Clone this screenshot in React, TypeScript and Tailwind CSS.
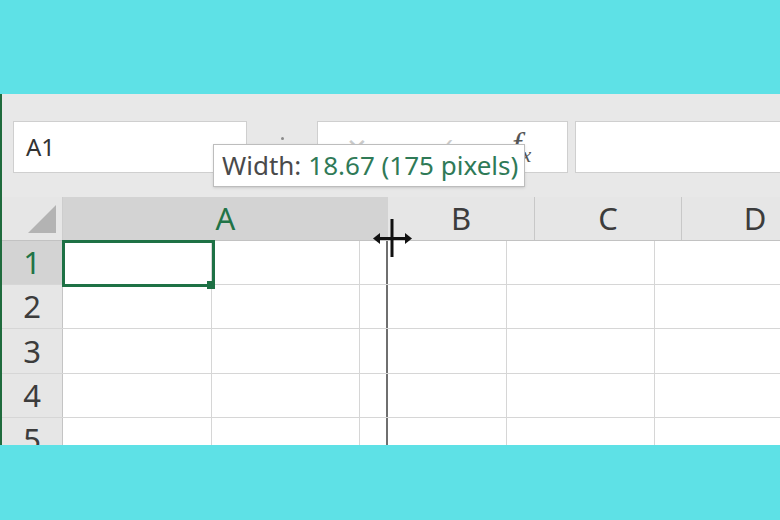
import React from 'react';

const font = { fontFamily: '"Noto Sans", "Open Sans", Arial, sans-serif' };

const cols = [
    { label: 'A', w: 'w-[325px]', active: true },
    { label: 'B', w: 'w-[147px]', active: false },
    { label: 'C', w: 'w-[147px]', active: false },
    { label: 'D', w: 'w-[147px]', active: false },
];

// grid lines in the body still sit on the old column widths
const cells = [
    'w-[149px] border-r border-[#d6d6d6]',
    'w-[148px] border-r border-[#d6d6d6]',
    'w-[28px] border-r-2 border-[#6f6f6f]',
    'w-[119px] border-r border-[#d6d6d6]',
    'w-[148px] border-r border-[#d6d6d6]',
    'w-[148px] border-r border-[#d6d6d6]',
];

const rows = [
    { n: 1, h: 'h-[44px]' },
    { n: 2, h: 'h-[44px]' },
    { n: 3, h: 'h-[45px]' },
    { n: 4, h: 'h-[44px]' },
    { n: 5, h: 'h-[44px]' },
];

const App: React.FC = () => {
    return (
        <div className="w-[780px] h-[520px] flex flex-col bg-[#5ee1e6] overflow-hidden" style={font}>
            <div className="h-[94px] shrink-0" />

            <div className="relative h-[351px] shrink-0 overflow-hidden bg-[#e8e8e8] border-l-2 border-[#1f6b3d]">
                {/* formula bar */}
                <div className="flex items-center h-[52px] mt-[27px] ml-[11px] -mr-[40px]">
                    <div className="w-[234px] h-full shrink-0 bg-white border border-[#cfcfcf] flex items-center pl-[12px] text-[24px] text-[#333]">
                        A1
                    </div>
                    <div className="w-[70px] h-full shrink-0 flex flex-col items-center justify-center gap-[6px]">
                        <span className="w-[3px] h-[3px] rounded-full bg-[#8a8a8a]" />
                        <span className="w-[3px] h-[3px] rounded-full bg-[#8a8a8a]" />
                        <span className="w-[3px] h-[3px] rounded-full bg-[#8a8a8a]" />
                    </div>
                    <div className="w-[251px] h-full shrink-0 bg-white border border-[#cfcfcf] flex items-start pt-[6px]">
                        <span className="ml-[28px] mt-[6px] text-[26px] text-[#cacaca] leading-none">✕</span>
                        <span className="ml-[68px] mt-[6px] text-[24px] text-[#cacaca] leading-none">✓</span>
                        <span
                            className="ml-[56px] text-[34px] italic text-[#555] leading-none"
                            style={{ fontFamily: '"Liberation Serif", "DejaVu Serif", serif' }}
                        >
                            f<sub className="text-[22px]">x</sub>
                        </span>
                    </div>
                    <div className="ml-[7px] flex-1 h-full bg-white border border-[#cfcfcf]" />
                </div>

                {/* column headers */}
                <div className="flex h-[44px] mt-[24px] bg-[#e6e6e6] border-b border-[#c2c2c2]">
                    <div className="w-[61px] shrink-0 flex items-end justify-end pr-[6px] pb-[7px] border-r border-[#cdcdcd]">
                        <svg width="28" height="28" viewBox="0 0 28 28">
                            <polygon points="28,0 28,28 0,28" fill="#b3b3b3" />
                        </svg>
                    </div>
                    {cols.map(c => (
                        <div
                            key={c.label}
                            className={`${c.w} shrink-0 flex items-center justify-center text-[31px] leading-none ${
                                c.active ? 'bg-[#d3d3d3] text-[#217346]' : 'text-[#3c3c3c] border-r border-[#c8c8c8]'
                            }`}
                        >
                            {c.label}
                        </div>
                    ))}
                </div>

                {/* rows */}
                {rows.map(r => (
                    <div key={r.n} className={`flex ${r.h} border-b border-[#d6d6d6]`}>
                        <div
                            className={`w-[61px] shrink-0 flex items-center justify-center text-[31px] leading-none border-r border-[#c4c4c4] ${
                                r.n === 1 ? 'bg-[#d3d3d3] text-[#217346]' : 'bg-[#e6e6e6] text-[#3c3c3c]'
                            }`}
                        >
                            {r.n}
                        </div>
                        {cells.map((c, i) => (
                            <div key={i} className={`${c} shrink-0 bg-white`} />
                        ))}
                    </div>
                ))}

                {/* selected cell */}
                <div className="absolute left-[60px] top-[146px] w-[153px] h-[47px] border-[3px] border-[#1e7145]" />
                <div className="absolute left-[205px] top-[187px] w-[8px] h-[8px] bg-[#1e7145]" />

                {/* tooltip */}
                <div className="absolute left-[211px] top-[50px] w-[312px] h-[43px] bg-white border border-[#bdbdbd] shadow-sm flex items-center pl-[8px] text-[26px] whitespace-nowrap">
                    <span className="text-[#4a4a4a]">Width:</span>
                    <span className="ml-[7px] text-[#2f7a57]">18.67 (175 pixels)</span>
                </div>

                {/* resize cursor */}
                <svg className="absolute left-[370px] top-[124px]" width="42" height="42" viewBox="0 0 42 42">
                    <rect x="18.5" y="1" width="3" height="38" fill="#111" />
                    <rect x="6" y="19" width="28" height="3" fill="#111" />
                    <polygon points="1,20.5 8,15 8,26" fill="#111" />
                    <polygon points="40,20.5 33,15 33,26" fill="#111" />
                </svg>
            </div>

            <div className="flex-1" />
        </div>
    );
};

export default App;
